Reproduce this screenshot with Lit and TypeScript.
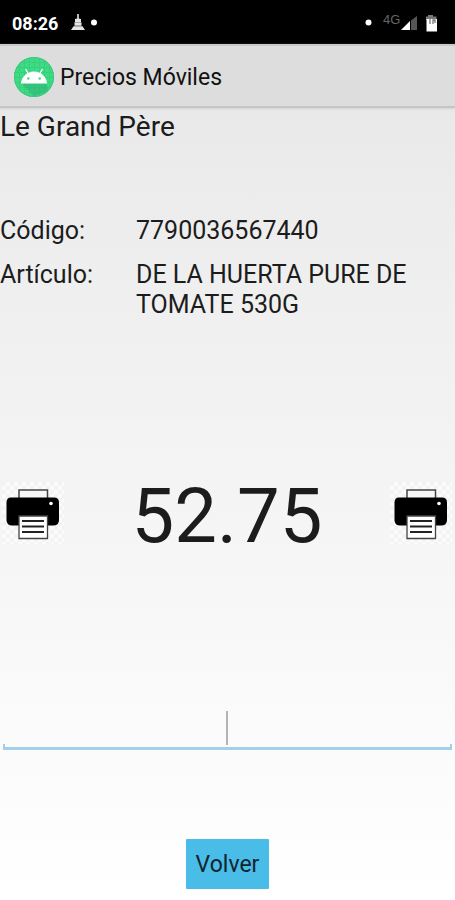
import { LitElement, html, css } from "lit";
import { customElement, property } from "lit/decorators.js";

@customElement("status-bar")
export class StatusBar extends LitElement {
  static styles = css`
    :host {
      display: flex;
      align-items: center;
      height: 44px;
      padding: 4px 16px 0 12px;
      box-sizing: border-box;
      background: #000;
      color: #fff;
      font: 700 18px/24px Roboto, sans-serif;
    }
    .notices {
      margin-left: 12px;
    }
    .signals {
      margin-left: auto;
    }
    svg {
      display: block;
    }
    .network {
      font: 500 13px "Liberation Sans", sans-serif;
      fill: #666;
    }
  `;

  render() {
    return html`
      <span>08:26</span>
      <svg class="notices" width="30" height="24" viewBox="0 0 30 24" aria-hidden="true">
        <path
          fill="#e4e4e4"
          d="M7.200 2h1.600v4.500l2.200.5v3H5V7l2.200-.5zM4.500 10.300h7v3.500h-7zM3.500 14.200h9L15 18H1z"
        />
        <circle cx="24" cy="10.500" r="3" fill="#fff" />
      </svg>
      <svg class="signals" width="74" height="24" viewBox="0 0 74 24" role="img" aria-label="4G">
        <circle cx="3.500" cy="10.500" r="3" fill="#fff" />
        <text class="network" x="18" y="12">4G</text>
        <path fill="#555" d="M46 8.500 52 4v14h-6z" />
        <path fill="#fff" d="M36 18 45 9v9z" />
        <path fill="#777" d="M63 3h5v1.500h3.500V8H61V4.500h2z" />
        <path fill="#fff" d="M61.500 7h10.500v12.500H61.500z" />
        <path fill="none" stroke="#777" stroke-width="1.300" d="M65 6v6M68 12V8h2v3" />
      </svg>
    `;
  }
}

@customElement("title-bar")
export class TitleBar extends LitElement {
  @property() heading = "";

  static styles = css`
    :host {
      display: flex;
      align-items: center;
      gap: 6px;
      height: 64px;
      padding: 2px 14px 0;
      box-sizing: border-box;
      background: #dddddd;
      border-top: 2px solid #c9c9c9;
      border-bottom: 2px solid #c6c6c6;
      box-shadow: 0 1px 2px #d4d4d4;
      position: relative;
    }
    h1 {
      margin: 0;
      padding-top: 2px;
      font: 400 23px/30px Roboto, sans-serif;
      color: #111;
    }
    svg {
      flex: none;
    }
  `;

  render() {
    return html`
      <svg width="40" height="40" viewBox="0 0 40 40" aria-hidden="true">
        <defs>
          <clipPath id="disc"><circle cx="20" cy="20" r="20" /></clipPath>
        </defs>
        <g clip-path="url(#disc)">
          <path fill="#3ddc84" d="M0 0h40v40H0z" />
          <path
            fill="none"
            stroke="#38d07d"
            d="M5.500 0v40M10.500 0v40M15.500 0v40M20.500 0v40M25.500 0v40M30.500 0v40M35.500 0v40M0 5.500h40M0 10.500h40M0 15.500h40M0 20.500h40M0 25.500h40M0 30.500h40M0 35.500h40"
          />
          <path fill="#33b878" opacity=".7" d="M7.500 26.500 20 39.500l14-6-1-7z" />
        </g>
        <circle cx="20" cy="20" r="19.500" fill="none" stroke="#40c47e" />
        <path fill="#fff" d="M7 26.500C7.500 19.500 13 14.500 20 14.500S32.500 19.500 33 26.500z" />
        <path
          fill="none"
          stroke="#fff"
          stroke-width="1.300"
          stroke-linecap="round"
          d="M14.500 17 11.800 12.500M25.500 17l2.700-4.500"
        />
        <circle cx="14.300" cy="21.500" r="1.200" fill="#3ddc84" />
        <circle cx="25.700" cy="21.500" r="1.200" fill="#3ddc84" />
      </svg>
      <h1>${this.heading}</h1>
    `;
  }
}

@customElement("print-button")
export class PrintButton extends LitElement {
  static styles = css`
    :host {
      display: block;
    }
    button {
      display: block;
      padding: 0;
      border: 0;
      background: none;
      cursor: pointer;
    }
    svg {
      display: block;
    }
  `;

  render() {
    return html`
      <button type="button" aria-label="Imprimir">
        <svg width="62" height="62" viewBox="0 0 62 62" aria-hidden="true">
          <defs>
            <pattern id="check" width="8" height="8" patternUnits="userSpaceOnUse">
              <path fill="#fbfbfb" d="M0 0h8v8H0z" />
              <path fill="#f3f3f3" d="M0 0h4v4H0zM4 4h4v4H4z" />
            </pattern>
          </defs>
          <path fill="url(#check)" d="M0 0h62v62H0z" />
          <path fill="#f8f8f8" stroke="#444" stroke-width="1.500" d="M17 18V8h28.500v10" />
          <path
            d="M9 15.500h43q5 0 5 5v17.500q0 5.500-6 5.500H10.500q-6 0-6-5.500V20.500q0-5 4.500-5z"
          />
          <circle cx="49" cy="21.500" r="1.800" fill="#fff" />
          <path fill="#fff" stroke="#444" stroke-width="1.300" d="M17 34h28.500v22.500H17z" />
          <path fill="none" stroke="#222" stroke-width="2" d="M20 39h22M20 44.500h22M20 50h22" />
        </svg>
      </button>
    `;
  }
}

@customElement("app-root")
export class AppRoot extends LitElement {
  static styles = css`
    :host {
      display: flex;
      flex-direction: column;
      min-height: 100vh;
      font-family: Roboto, sans-serif;
      color: #1c1c1c;
    }
    main {
      flex: 1;
      display: flex;
      flex-direction: column;
      background: linear-gradient(#e9e9e9, #eeeeee 18%, #f5f5f5 52%, #fafafa 75%, #ffffff);
    }
    h2 {
      margin: 2px 0 0;
      font-weight: 400;
      font-size: 28px;
      line-height: 34px;
    }
    .details {
      display: grid;
      grid-template-columns: 136px 1fr;
      row-gap: 14px;
      margin: 72px 24px 0 0;
      font-size: 25px;
      line-height: 30px;
    }
    dt,
    dd {
      margin: 0;
    }
    .price-row {
      display: flex;
      align-items: center;
      justify-content: space-between;
      margin-top: 145px;
      padding: 0 3px 0 2px;
    }
    .price {
      padding-top: 6px;
      font-size: 76px;
      line-height: 90px;
    }
    .field {
      position: relative;
      margin: 142px 3px 0;
      border-bottom: 3px solid #a3cfea;
    }
    .field::before,
    .field::after {
      content: "";
      position: absolute;
      bottom: 0;
      width: 2px;
      height: 3px;
      background: #a3cfea;
    }
    .field::before {
      left: 0;
    }
    .field::after {
      right: 0;
    }
    input {
      display: block;
      width: 100%;
      height: 44px;
      box-sizing: border-box;
      padding: 0;
      border: 0;
      outline: 0;
      background: none;
      text-align: center;
      font: 25px/30px Roboto, sans-serif;
      color: inherit;
    }
    .caret {
      position: absolute;
      left: 50%;
      bottom: 2px;
      width: 2px;
      height: 34px;
      margin-left: -2px;
      background: #b4b4b4;
      pointer-events: none;
    }
    .field:focus-within .caret {
      display: none;
    }
    .back {
      align-self: center;
      margin: 89px 0 11px;
      padding: 11px 10px 9px;
      border: 0;
      border-radius: 1px;
      background: #4abce8;
      font: 23px/30px Roboto, sans-serif;
      color: #10242d;
      cursor: pointer;
    }
  `;

  render() {
    return html`
      <status-bar></status-bar>
      <title-bar heading="Precios Móviles"></title-bar>
      <main>
        <h2>Le Grand Père</h2>
        <dl class="details">
          <dt>Código:</dt>
          <dd>7790036567440</dd>
          <dt>Artículo:</dt>
          <dd>DE LA HUERTA PURE DE TOMATE 530G</dd>
        </dl>
        <div class="price-row">
          <print-button></print-button>
          <span class="price">52.75</span>
          <print-button></print-button>
        </div>
        <div class="field">
          <input type="text" inputmode="numeric" aria-label="Código de barras" />
          <span class="caret"></span>
        </div>
        <button class="back" type="button">Volver</button>
      </main>
    `;
  }
}
